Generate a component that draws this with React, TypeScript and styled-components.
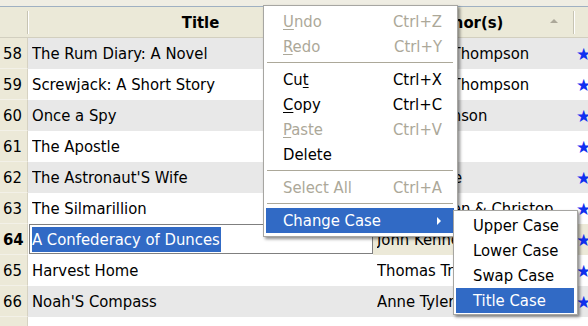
import React from 'react'
import styled, { createGlobalStyle } from 'styled-components'

const GlobalStyle = createGlobalStyle`
  html, body {
    margin: 0;
    padding: 0;
    background: #ffffff;
    overflow: hidden;
  }
  body {
    font-family: "DejaVu Sans Condensed", "DejaVu Sans", sans-serif;
    font-stretch: condensed;
    font-size: 16.5px;
    color: #000000;
  }
`

const COLS = '28px 345px 201px 1fr'

interface Book {
  n: number
  title: string
  author: string
}

const books: Book[] = [
  { n: 58, title: 'The Rum Diary: A Novel', author: 'Hunter S. Thompson' },
  { n: 59, title: 'Screwjack: A Short Story', author: 'Hunter S. Thompson' },
  { n: 60, title: 'Once a Spy', author: 'Keith Thomson' },
  { n: 61, title: 'The Apostle', author: 'Brad Thor' },
  { n: 62, title: "The Astronaut'S Wife", author: 'Robert Tine' },
  { n: 63, title: 'The Silmarillion', author: 'J.R.R. Tolkien & Christopher Tolkien' },
  { n: 64, title: 'A Confederacy of Dunces', author: 'John Kennedy Toole' },
  { n: 65, title: 'Harvest Home', author: 'Thomas Tryon' },
  { n: 66, title: "Noah'S Compass", author: 'Anne Tyler' },
  { n: 67, title: '', author: '' },
]

const EDITING = 64

export default function App() {
  return (
    <>
      <GlobalStyle />
      <Window>
        <TopBand />
        <HeaderRow>
          <HeaderCell />
          <HeaderCell>Title</HeaderCell>
          <HeaderCell $sorted>
            Author(s)
            <SortArrow />
          </HeaderCell>
          <HeaderCell $last />
        </HeaderRow>

        {books.map((b, i) => {
          const current = b.n === EDITING
          return (
            <Row key={b.n} $shade={i % 2 === 0}>
              <NumCell $current={current}>{b.n < 67 ? b.n : ''}</NumCell>
              {current ? (
                <EditCell>
                  <Editor>
                    <Selected>{b.title}</Selected>
                  </Editor>
                </EditCell>
              ) : (
                <Cell>
                  <Clip>{b.title}</Clip>
                </Cell>
              )}
              <Cell $current={current} $padRight={20}>
                <Clip>{b.author}</Clip>
              </Cell>
              <StarCell $current={current}>{b.n < 67 ? '★' : ''}</StarCell>
            </Row>
          )
        })}

        <Menu>
          <Item $disabled>
            <span><u>U</u>ndo</span>
            <span>Ctrl+Z</span>
          </Item>
          <Item $disabled>
            <span><u>R</u>edo</span>
            <span>Ctrl+Y</span>
          </Item>
          <Separator />
          <Item>
            <span>Cu<u>t</u></span>
            <span>Ctrl+X</span>
          </Item>
          <Item>
            <span><u>C</u>opy</span>
            <span>Ctrl+C</span>
          </Item>
          <Item $disabled>
            <span><u>P</u>aste</span>
            <span>Ctrl+V</span>
          </Item>
          <Item>
            <span>Delete</span>
          </Item>
          <Separator />
          <Item $disabled>
            <span>Select All</span>
            <span>Ctrl+A</span>
          </Item>
          <Separator />
          <Item $active>
            <span>Change Case</span>
            <svg width="5" height="8" viewBox="0 0 5 8">
              <polygon points="0,0 4,4 0,8" fill="#ffffff" />
            </svg>
          </Item>
        </Menu>

        <SubMenu>
          <SubItem>Upper Case</SubItem>
          <SubItem>Lower Case</SubItem>
          <SubItem>Swap Case</SubItem>
          <SubItem $active>Title Case</SubItem>
        </SubMenu>
      </Window>
    </>
  )
}

const Window = styled.div`
  position: relative;
  width: 588px;
  height: 326px;
  overflow: hidden;
  background: #ffffff;
`

const TopBand = styled.div`
  height: 6px;
  background: #efede3;
  border-bottom: 1px solid #9fb0c2;
`

const HeaderRow = styled.div`
  display: grid;
  grid-template-columns: ${COLS};
  height: 30px;
  background: #ebe9d8;
  border-bottom: 1px solid #d2cfbf;
`

const HeaderCell = styled.div<{ $sorted?: boolean; $last?: boolean }>`
  position: relative;
  display: flex;
  align-items: center;
  justify-content: center;
  padding-right: ${p => (p.$sorted ? '20px' : '0')};
  font-weight: bold;

  &::after {
    content: '';
    display: ${p => (p.$last ? 'none' : 'block')};
    position: absolute;
    right: 0;
    top: 4px;
    bottom: 3px;
    width: 1px;
    background: #c7c4b3;
    box-shadow: 1px 0 #ffffff;
  }
`

const SortArrow = styled.span`
  position: absolute;
  right: 16px;
  top: 12px;
  width: 0;
  height: 0;
  border-left: 4px solid transparent;
  border-right: 4px solid transparent;
  border-bottom: 4px solid #aca899;
`

const Row = styled.div<{ $shade: boolean }>`
  display: grid;
  grid-template-columns: ${COLS};
  height: 31px;
  background: ${p => (p.$shade ? '#e8e8e8' : '#ffffff')};
`

const NumCell = styled.div<{ $current?: boolean }>`
  display: flex;
  align-items: center;
  padding-left: 3px;
  background: #ece9d8;
  border-right: 1px solid #d6d2c2;
  border-bottom: 1px solid #f3f1e8;
  font-weight: ${p => (p.$current ? 'bold' : 'normal')};
`

const Cell = styled.div<{ $current?: boolean; $padRight?: number }>`
  display: flex;
  align-items: center;
  min-width: 0;
  padding-left: 4px;
  padding-right: ${p => p.$padRight ?? 0}px;
  background: ${p => (p.$current ? '#ece9d8' : 'transparent')};
`

const Clip = styled.span`
  display: block;
  white-space: nowrap;
  overflow: hidden;
`

const EditCell = styled.div`
  display: flex;
  align-items: flex-start;
  background: #ffffff;
`

const Editor = styled.div`
  box-sizing: border-box;
  width: 100%;
  height: 30px;
  margin-left: 1px;
  padding: 2px 0 0 2px;
  border: 1px solid #7f7f7f;
  background: #ffffff;
  white-space: nowrap;
`

const Selected = styled.span`
  display: inline-block;
  line-height: 25px;
  padding-right: 1px;
  background: #316ac5;
  color: #ffffff;
`

const StarCell = styled.div<{ $current?: boolean }>`
  display: flex;
  align-items: center;
  padding-left: 2px;
  font-family: "DejaVu Sans", sans-serif;
  font-stretch: normal;
  font-size: 17px;
  color: #1030f0;
  background: ${p => (p.$current ? '#ece9d8' : 'transparent')};
`

const Menu = styled.div`
  position: absolute;
  left: 263px;
  top: 5px;
  width: 195px;
  box-sizing: border-box;
  padding: 3px 3px 3px 2px;
  background: #ffffff;
  border: 1px solid #a7a6a2;
  box-shadow: 2px 2px 3px rgba(0, 0, 0, 0.45);
`

const Item = styled.div<{ $disabled?: boolean; $active?: boolean }>`
  display: flex;
  align-items: center;
  justify-content: space-between;
  height: 25px;
  padding: 0 12px 0 17px;
  color: ${p => (p.$disabled ? '#aca899' : p.$active ? '#ffffff' : '#000000')};
  background: ${p => (p.$active ? '#316ac5' : 'transparent')};

  u {
    text-decoration-thickness: 1px;
    text-underline-offset: 2px;
  }
`

const Separator = styled.div`
  height: 1px;
  margin: 3px 1px 4px 1px;
  background: #aca899;
`

const SubMenu = styled.div`
  position: absolute;
  left: 453px;
  top: 210px;
  width: 125px;
  box-sizing: border-box;
  padding: 2px 3px 1px 2px;
  background: #ffffff;
  border: 1px solid #a7a6a2;
  box-shadow: 2px 2px 3px rgba(0, 0, 0, 0.45);
`

const SubItem = styled.div<{ $active?: boolean }>`
  display: flex;
  align-items: center;
  height: 25px;
  padding-left: 17px;
  color: ${p => (p.$active ? '#ffffff' : '#000000')};
  background: ${p => (p.$active ? '#316ac5' : 'transparent')};
`
